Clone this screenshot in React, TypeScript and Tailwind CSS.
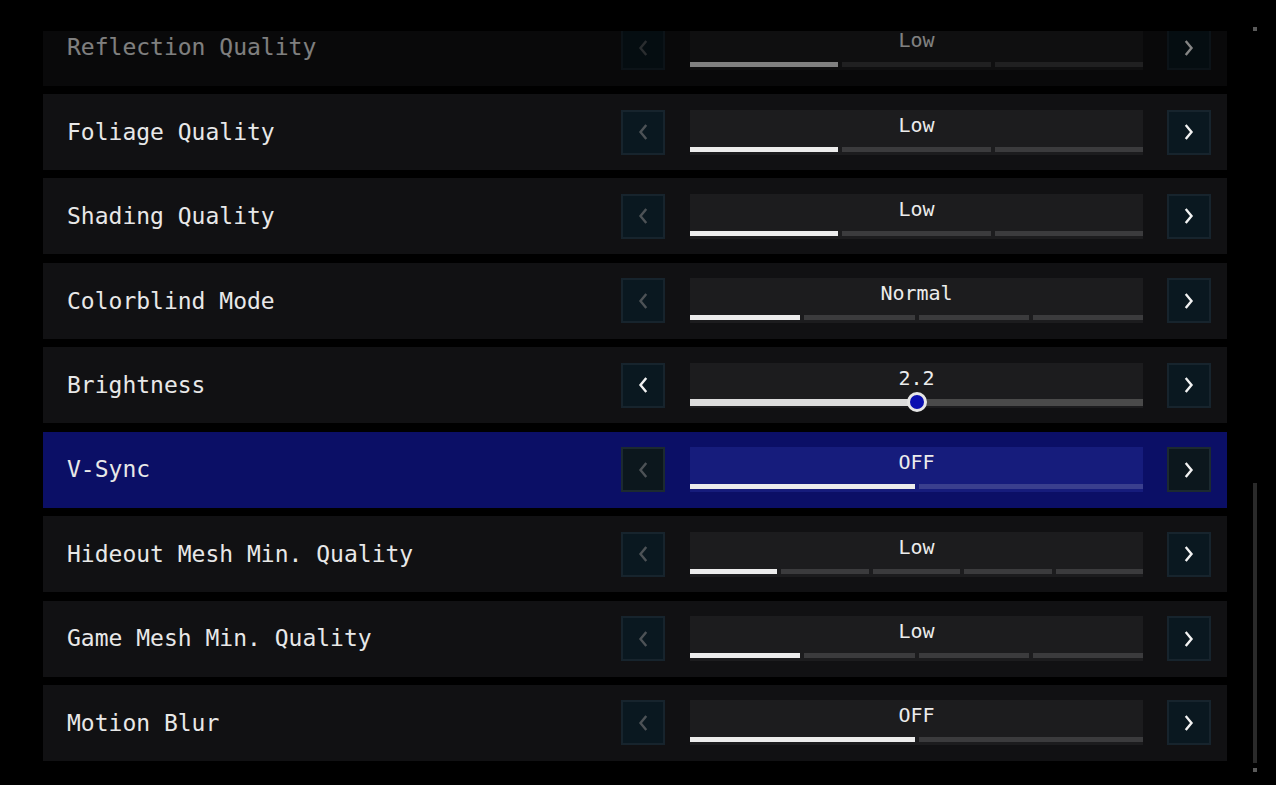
import React from 'react';

type Setting =
  | { label: string; kind: 'steps'; value: string; steps: number; active: number; prevOn?: boolean }
  | { label: string; kind: 'slider'; value: string; pct: number; prevOn?: boolean };

const settings: Setting[] = [
  { label: 'Reflection Quality', kind: 'steps', value: 'Low', steps: 3, active: 0 },
  { label: 'Foliage Quality', kind: 'steps', value: 'Low', steps: 3, active: 0 },
  { label: 'Shading Quality', kind: 'steps', value: 'Low', steps: 3, active: 0 },
  { label: 'Colorblind Mode', kind: 'steps', value: 'Normal', steps: 4, active: 0 },
  { label: 'Brightness', kind: 'slider', value: '2.2', pct: 50, prevOn: true },
  { label: 'V-Sync', kind: 'steps', value: 'OFF', steps: 2, active: 0 },
  { label: 'Hideout Mesh Min. Quality', kind: 'steps', value: 'Low', steps: 5, active: 0 },
  { label: 'Game Mesh Min. Quality', kind: 'steps', value: 'Low', steps: 4, active: 0 },
  { label: 'Motion Blur', kind: 'steps', value: 'OFF', steps: 2, active: 0 },
];

const mono = { fontFamily: '"DejaVu Sans Mono", "Liberation Mono", monospace' };

function Chevron({ dir, on }: { dir: 'left' | 'right'; on: boolean }) {
  return (
    <svg width="10" height="16" viewBox="0 0 10 16" fill="none">
      <path
        d={dir === 'left' ? 'M7.5 2 L2.5 8 L7.5 14' : 'M2.5 2 L7.5 8 L2.5 14'}
        stroke={on ? '#f2f2f2' : '#4d5256'}
        strokeWidth="2.4"
        strokeLinecap="square"
      />
    </svg>
  );
}

function ArrowButton({ dir, on, selected }: { dir: 'left' | 'right'; on: boolean; selected: boolean }) {
  return (
    <div
      className={`w-[44px] h-[45px] shrink-0 flex items-center justify-center border-2 ${
        selected ? 'bg-[#0c171d] border-[#1c2a30]' : 'bg-[#0a1820] border-[#17242d]'
      }`}
    >
      <Chevron dir={dir} on={on} />
    </div>
  );
}

function Row({ s, selected }: { s: Setting; selected: boolean }) {
  return (
    <div
      className={`h-[76px] shrink-0 flex items-center pl-6 pr-4 ${selected ? 'bg-[#0b0f66]' : 'bg-[#111113]'}`}
    >
      <div className="flex-1 text-[23px] text-[#e8e8e8]" style={mono}>
        {s.label}
      </div>
      <ArrowButton dir="left" on={!!s.prevOn} selected={selected} />
      <div
        className={`ml-[25px] mr-[24px] w-[453px] h-[45px] flex flex-col ${selected ? 'bg-[#161c7c]' : 'bg-[#1c1c1e]'}`}
      >
        <div className="pt-[3px] h-[30px] leading-[24px] text-center text-[20px] text-[#ececec]" style={mono}>
          {s.value}
        </div>
        {s.kind === 'slider' ? (
          <div className="relative mt-[6px] h-[7px] bg-[#4a4a4a]">
            <div className="h-full bg-[#dcdcdc]" style={{ width: `${s.pct}%` }} />
            <div
              className="absolute top-1/2 -translate-y-1/2 -translate-x-1/2 w-[20px] h-[20px] rounded-full bg-[#0a0fb0] border-[3px] border-[#e6e6e6]"
              style={{ left: `${s.pct}%` }}
            />
          </div>
        ) : (
          <div className="mt-[7px] flex gap-[4px] h-[5px]">
            {Array.from({ length: s.steps }).map((_, i) => (
              <div
                key={i}
                className={`flex-1 ${
                  i === s.active
                    ? 'bg-[#ececec]'
                    : selected
                    ? 'bg-[#3a3f8e]'
                    : 'bg-[#3b3b3d]'
                }`}
              />
            ))}
          </div>
        )}
      </div>
      <ArrowButton dir="right" on selected={selected} />
    </div>
  );
}

export default function App() {
  return (
    <div className="relative w-full h-screen bg-black overflow-hidden">
      <div className="ml-[43px] mt-[31px] w-[1184px] h-[754px] overflow-hidden">
        <div className="-mt-[21.4px] flex flex-col gap-[8.43px]">
          {settings.map((s, i) => (
            <div key={s.label} className={i === 0 ? 'opacity-55' : ''}>
              <Row s={s} selected={s.label === 'V-Sync'} />
            </div>
          ))}
        </div>
      </div>

      {/* scrollbar */}
      <div className="absolute left-[1253px] top-[27px] w-[4px] h-[4px] bg-[#5a5a5a]" />
      <div className="absolute left-[1253px] top-[483px] w-[4px] h-[280px] bg-[#2a2a2a]" />
      <div className="absolute left-[1253px] top-[768px] w-[4px] h-[4px] bg-[#5a5a5a]" />
    </div>
  );
}
